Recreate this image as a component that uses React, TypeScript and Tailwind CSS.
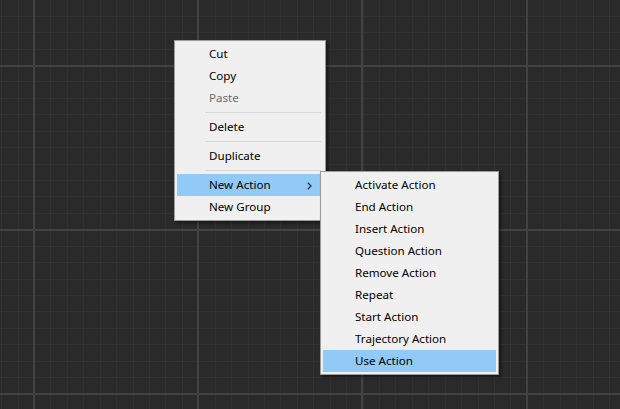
const MAJOR = 164.3;
const MINOR = MAJOR / 10;

function Grid() {
  const minorX: number[] = [];
  const minorY: number[] = [];
  for (let k = -3; k * MINOR + 34 < 620; k++) minorX.push(Math.round(34 + k * MINOR));
  for (let k = -4; k * MINOR + 65 < 409; k++) minorY.push(Math.round(65 + k * MINOR));
  const majorX = [34, 198, 362, 527];
  const majorY = [65, 229, 393];
  return (
    <svg className="absolute inset-0" width="620" height="409" shapeRendering="crispEdges">
      <rect width="620" height="409" fill="#2a2a2a" />
      {minorX.map((x) => (
        <rect key={"vx" + x} x={x} y={0} width={1} height={409} fill="#313131" />
      ))}
      {minorY.map((y) => (
        <rect key={"hy" + y} x={0} y={y} width={620} height={1} fill="#313131" />
      ))}
      {majorX.map((x) => (
        <rect key={"mx" + x} x={x - 1} y={0} width={2} height={409} fill="#434343" />
      ))}
      {majorY.map((y) => (
        <rect key={"my" + y} x={0} y={y} width={620} height={2} fill="#434343" />
      ))}
    </svg>
  );
}

type Item = { label: string; disabled?: boolean; active?: boolean; sub?: boolean } | "sep";

function MenuRow({ item }: { item: Item }) {
  if (item === "sep") {
    return (
      <div className="flex h-[7px] items-center pl-[28px] pr-[2px]">
        <div className="h-px w-full bg-[#d7d7d7]" />
      </div>
    );
  }
  return (
    <div
      className={
        "flex h-[22px] items-center pl-[32px] pr-[11px] " +
        (item.active ? "bg-[#91c9f7] " : "") +
        (item.disabled ? "text-[#6d6d6d]" : "text-black")
      }
    >
      <span className="flex-1 whitespace-nowrap">{item.label}</span>
      {item.sub && (
        <svg width="5" height="8" viewBox="0 0 5 8" className="mt-[1px]">
          <path d="M0.8 0.8 L4 4 L0.8 7.2" fill="none" stroke="#333" strokeWidth="1.3" />
        </svg>
      )}
    </div>
  );
}

function Menu({ items, className }: { items: Item[]; className: string }) {
  return (
    <div
      className={
        "absolute border border-[#9a9a9a] bg-[#f0f0f0] p-[2px] text-[11.6px] leading-none shadow-[2px_2px_3px_rgba(0,0,0,0.45)] " +
        className
      }
    >
      {items.map((it, i) => (
        <MenuRow key={i} item={it} />
      ))}
    </div>
  );
}

const mainItems: Item[] = [
  { label: "Cut" },
  { label: "Copy" },
  { label: "Paste", disabled: true },
  "sep",
  { label: "Delete" },
  "sep",
  { label: "Duplicate" },
  "sep",
  { label: "New Action", active: true, sub: true },
  { label: "New Group" },
];

const subItems: Item[] = [
  { label: "Activate Action" },
  { label: "End Action" },
  { label: "Insert Action" },
  { label: "Question Action" },
  { label: "Remove Action" },
  { label: "Repeat" },
  { label: "Start Action" },
  { label: "Trajectory Action" },
  { label: "Use Action", active: true },
];

export default function App() {
  return (
    <div className="relative h-[409px] w-[620px] overflow-hidden bg-[#2a2a2a] font-['Segoe_UI','Noto_Sans',sans-serif]">
      <Grid />
      <Menu items={mainItems} className="left-[174px] top-[40px] w-[152px]" />
      <Menu items={subItems} className="left-[320px] top-[171px] w-[179px]" />
    </div>
  );
}
